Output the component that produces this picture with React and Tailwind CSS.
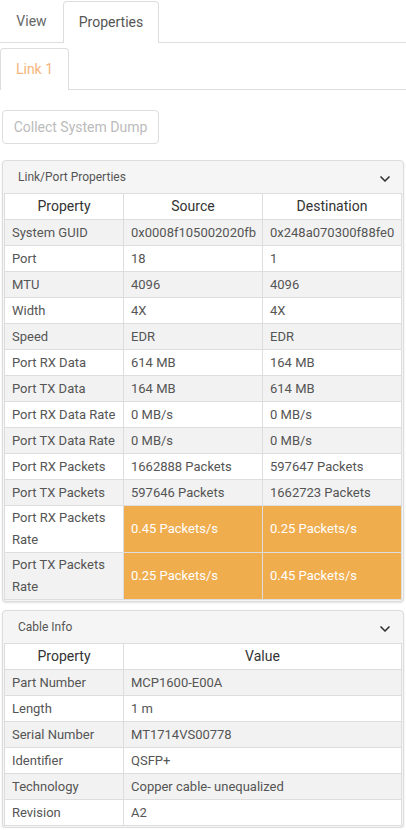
import React from 'react';
import { ChevronDown } from 'lucide-react';

const linkRows = [
  ['System GUID', '0x0008f105002020fb', '0x248a070300f88fe0'],
  ['Port', '18', '1'],
  ['MTU', '4096', '4096'],
  ['Width', '4X', '4X'],
  ['Speed', 'EDR', 'EDR'],
  ['Port RX Data', '614 MB', '164 MB'],
  ['Port TX Data', '164 MB', '614 MB'],
  ['Port RX Data Rate', '0 MB/s', '0 MB/s'],
  ['Port TX Data Rate', '0 MB/s', '0 MB/s'],
  ['Port RX Packets', '1662888 Packets', '597647 Packets'],
  ['Port TX Packets', '597646 Packets', '1662723 Packets'],
  ['Port RX Packets Rate', '0.45 Packets/s', '0.25 Packets/s', true],
  ['Port TX Packets Rate', '0.25 Packets/s', '0.45 Packets/s', true],
];

const cableRows = [
  ['Part Number', 'MCP1600-E00A'],
  ['Length', '1 m'],
  ['Serial Number', 'MT1714VS00778'],
  ['Identifier', 'QSFP+'],
  ['Technology', 'Copper cable- unequalized'],
  ['Revision', 'A2'],
];

const Panel = ({ title, children }) => (
  <div className="rounded border border-[#dddddd] bg-[#f5f5f5] shadow-[0_1px_2px_rgba(0,0,0,0.12)]">
    <div className="flex h-[32px] items-center justify-between pl-[15px] pr-[10px] text-[12px] text-[#555]">
      <span>{title}</span>
      <ChevronDown size={16} strokeWidth={2.5} className="mt-[4px] text-[#333]" />
    </div>
    <div className="px-px pb-px">{children}</div>
  </div>
);

const th = 'border border-[#dddddd] h-[26px] p-0 text-center font-normal text-[14px] text-[#333]';
const td = 'border border-[#dddddd] px-[7px] py-0 text-left align-middle';

export default function App() {
  return (
    <div className="w-[406px] bg-white font-['Roboto',sans-serif] text-[13px] text-[#555]">
      {/* top tabs */}
      <div className="flex h-[43px] items-end border-b border-[#dddddd] pr-[2px]">
        <div className="flex h-[41px] w-[63px] items-center justify-center text-[14px] text-[#666]">View</div>
        <div className="-mb-px flex h-[42px] w-[96px] items-center justify-center rounded-t border border-b-0 border-[#dddddd] bg-white text-[14px] text-[#555]">
          Properties
        </div>
      </div>

      <div className="mt-[5px] flex h-[42px] items-end border-b border-[#dddddd]">
        <div className="-mb-px flex h-[42px] w-[69px] items-center justify-center rounded-t border border-b-0 border-[#dddddd] bg-white text-[14px] text-[#f5b57a]">
          Link 1
        </div>
      </div>

      <div className="px-[2px] pt-[20px]">
        <button className="h-[34px] w-[157px] rounded border border-[#dddddd] bg-white text-[14px] text-[#bbbbbb]">
          Collect System Dump
        </button>

        <div className="mt-[16px]">
          <Panel title="Link/Port Properties">
            <table className="w-full table-fixed border-collapse bg-white">
              <colgroup>
                <col className="w-[119px]" />
                <col className="w-[139px]" />
                <col />
              </colgroup>
              <thead>
                <tr>
                  <th className={th}>Property</th>
                  <th className={th}>Source</th>
                  <th className={th}>Destination</th>
                </tr>
              </thead>
              <tbody>
                {linkRows.map(([name, src, dst, warn], i) => (
                  <tr key={name} className={i % 2 === 0 ? 'bg-[#f2f2f2]' : 'bg-white'}>
                    <td className={`${td} ${warn ? 'h-[47px] py-px leading-[22px]' : 'h-[26px]'}`}>{name}</td>
                    <td className={`${td} ${warn ? 'bg-[#f0ad4e] text-white' : ''}`}>{src}</td>
                    <td className={`${td} whitespace-nowrap ${warn ? 'bg-[#f0ad4e] text-white' : ''}`}>{dst}</td>
                  </tr>
                ))}
              </tbody>
            </table>
          </Panel>
        </div>

        <div className="mt-[8px]">
          <Panel title="Cable Info">
            <table className="w-full table-fixed border-collapse bg-white">
              <colgroup>
                <col className="w-[119px]" />
                <col />
              </colgroup>
              <thead>
                <tr>
                  <th className={th}>Property</th>
                  <th className={th}>Value</th>
                </tr>
              </thead>
              <tbody>
                {cableRows.map(([name, val], i) => (
                  <tr key={name} className={i % 2 === 0 ? 'bg-[#f2f2f2]' : 'bg-white'}>
                    <td className={`${td} h-[26px]`}>{name}</td>
                    <td className={td}>{val}</td>
                  </tr>
                ))}
              </tbody>
            </table>
          </Panel>
        </div>
      </div>
    </div>
  );
}
